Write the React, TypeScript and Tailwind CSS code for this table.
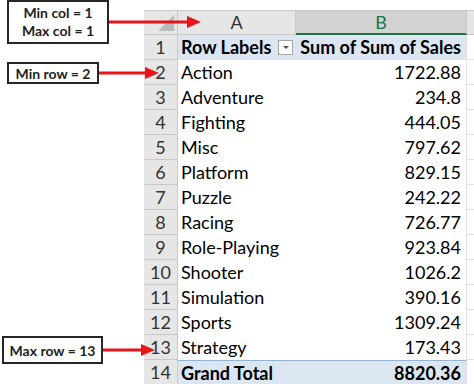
const rows = [
  { n: 2, label: 'Action', value: '1722.88' },
  { n: 3, label: 'Adventure', value: '234.8' },
  { n: 4, label: 'Fighting', value: '444.05' },
  { n: 5, label: 'Misc', value: '797.62' },
  { n: 6, label: 'Platform', value: '829.15' },
  { n: 7, label: 'Puzzle', value: '242.22' },
  { n: 8, label: 'Racing', value: '726.77' },
  { n: 9, label: 'Role-Playing', value: '923.84' },
  { n: 10, label: 'Shooter', value: '1026.2' },
  { n: 11, label: 'Simulation', value: '390.16' },
  { n: 12, label: 'Sports', value: '1309.24' },
  { n: 13, label: 'Strategy', value: '173.43' },
]

const font = { fontFamily: 'Lato, "Open Sans", sans-serif' }

function Arrow({ width }: { width: number }) {
  return (
    <svg width={width} height={14} viewBox={`0 0 ${width} 14`}>
      <line x1={0} y1={7} x2={width - 12} y2={7} stroke="#e8141b" strokeWidth={3} />
      <polygon points={`${width - 14},1 ${width},7 ${width - 14},13`} fill="#e8141b" />
    </svg>
  )
}

function RowNum({ n }: { n: number }) {
  return (
    <div className="flex h-[25px] items-center justify-center border-r border-b border-[#c8c8c8] bg-[#e6e6e6] text-[18px] text-[#333]">
      {n}
    </div>
  )
}

export default function App() {
  return (
    <div className="relative h-[384px] w-[474px] overflow-hidden bg-white text-black" style={font}>
      <div className="ml-[144px] pt-[10px]">
        <div className="grid grid-cols-[34px_118px_171px_7px]">
          {/* column headers */}
          <div className="relative h-[25px] border-t border-r border-b border-[#c8c8c8] bg-[#e6e6e6]">
            <div className="absolute right-[3px] bottom-[3px] h-0 w-0 border-b-[16px] border-l-[16px] border-b-[#b9b9b9] border-l-transparent" />
          </div>
          <div className="flex h-[25px] items-center justify-center border-t border-r border-b border-[#c8c8c8] bg-[#e6e6e6] text-[18px] text-[#333]">
            A
          </div>
          <div className="flex h-[25px] items-center justify-center border-t border-r border-[#c8c8c8] border-b-2 border-b-[#217346] bg-[#d3d3d3] text-[18px] text-[#217346]">
            B
          </div>
          <div className="h-[25px] border-t border-b border-[#c8c8c8] bg-[#e6e6e6]" />

          {/* row 1 */}
          <RowNum n={1} />
          <div className="flex h-[25px] items-center justify-between bg-[#dce6f2] pr-[3px] pl-[3px] text-[18px] font-bold">
            <span className="whitespace-nowrap">Row Labels</span>
            <span className="flex h-[15px] w-[15px] shrink-0 items-center justify-center border border-[#a6a6a6] bg-white">
              <span className="h-0 w-0 border-t-[3px] border-r-[3px] border-l-[3px] border-t-[#555] border-r-transparent border-l-transparent" />
            </span>
          </div>
          <div className="flex h-[25px] items-center justify-end border-r border-[#e0e0e0] bg-[#dce6f2] pr-[5px] text-[18px] font-bold whitespace-nowrap">
            Sum of Sum of Sales
          </div>
          <div className="h-[25px] border-b border-[#e0e0e0]" />

          {rows.map((r) => (
            <div key={r.n} className="contents">
              <RowNum n={r.n} />
              <div className="flex h-[25px] items-center pl-[3px] text-[18px]">{r.label}</div>
              <div className="flex h-[25px] items-center justify-end border-r border-[#e0e0e0] pr-[5px] text-[18px]">
                {r.value}
              </div>
              <div className="h-[25px] border-b border-[#e0e0e0]" />
            </div>
          ))}

          {/* grand total */}
          <RowNum n={14} />
          <div className="flex h-[25px] items-center border-t border-[#95b3d7] bg-[#dce6f2] pl-[3px] text-[18px] font-bold">
            Grand Total
          </div>
          <div className="flex h-[25px] items-center justify-end border-t border-r border-[#95b3d7] border-r-[#e0e0e0] bg-[#dce6f2] pr-[5px] text-[18px] font-bold">
            8820.36
          </div>
          <div className="h-[25px] border-b border-[#e0e0e0]" />
        </div>
      </div>

      {/* callouts */}
      <div className="absolute top-0 left-[7px] flex items-center">
        <div className="flex h-[44px] w-[102px] flex-col items-center justify-center border-2 border-[#262626] bg-white text-[14px] leading-[18px] font-bold text-[#222]">
          <span>Min col = 1</span>
          <span>Max col = 1</span>
        </div>
        <Arrow width={92} />
      </div>
      <div className="absolute top-[62px] left-[7px] flex items-center">
        <div className="flex h-[22px] w-[92px] items-center justify-center border-2 border-[#262626] bg-white text-[14px] font-bold text-[#222]">
          Min row = 2
        </div>
        <Arrow width={60} />
      </div>
      <div className="absolute top-[336px] left-[2px] flex items-center">
        <div className="flex h-[28px] w-[101px] items-center justify-center border-2 border-[#262626] bg-white text-[14px] font-bold text-[#222]">
          Max row = 13
        </div>
        <Arrow width={52} />
      </div>
    </div>
  )
}
